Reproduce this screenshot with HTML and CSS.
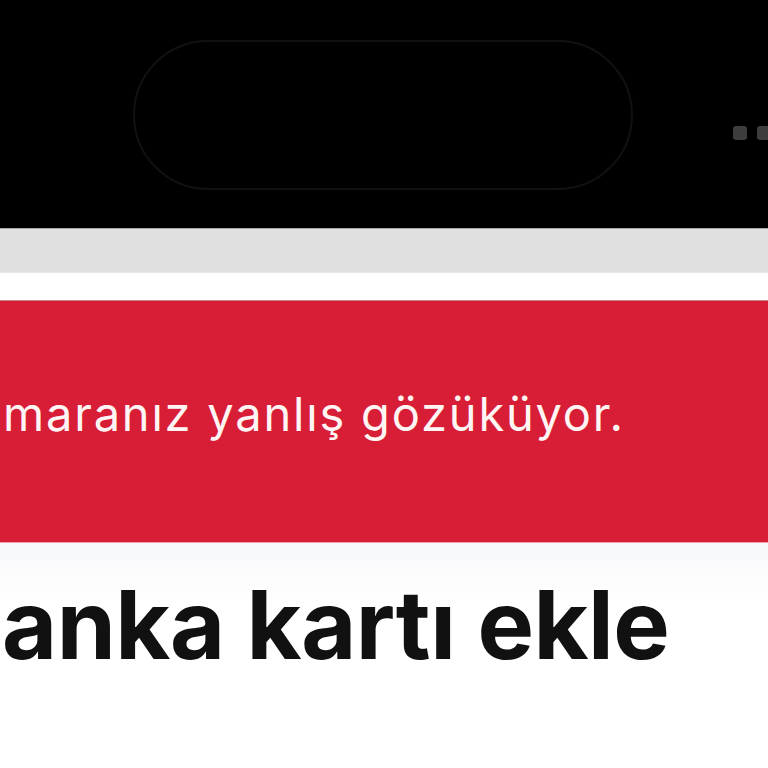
FILE: index.html
```html
<!DOCTYPE html>
<html lang="tr">
<head>
<meta charset="utf-8">
<link rel="stylesheet" href="styles.css">
</head>
<body>
<div class="status">
  <div class="island"></div>
  <div class="dots"><span class="dot"></span><span class="dot"></span></div>
</div>
<div class="toolbar"></div>
<div class="gap"></div>
<div class="alert"><p class="alert-text">maranız yanlış gözüküyor.</p></div>
<div class="content">
  <h1 class="title">anka kartı ekle</h1>
</div>
</body>
</html>
```
FILE: styles.css
```css
html, body {
  margin: 0;
  padding: 0;
  background: #ffffff;
  width: 768px;
  height: 768px;
  overflow: hidden;
  font-family: Inter, "Open Sans", sans-serif;
}
.status {
  background: #000;
  height: 229px;
  display: flex;
  align-items: flex-start;
  padding-left: 133px;
  box-sizing: border-box;
  border-bottom: 1px solid #a8a8a8;
}
.island {
  margin-top: 40px;
  width: 500px;
  height: 150px;
  border: 2px solid #111;
  border-radius: 75px;
  box-sizing: border-box;
  flex: none;
}
.dots {
  display: flex;
  gap: 10px;
  margin-left: 100px;
  margin-top: 126px;
  flex: none;
}
.dot {
  width: 14px;
  height: 14px;
  border-radius: 3px;
  background: #3d3d3d;
}
.toolbar {
  background: #e0e0e0;
  height: 43px;
  border-bottom: 1px solid #e8e8e8;
}
.gap {
  height: 27px;
  background: #fff;
  border-bottom: 1px solid #c9828b;
}
.alert {
  background: #d81e36;
  height: 242px;
  box-sizing: border-box;
  border-bottom: 1px solid #f0a0aa;
  display: flex;
  align-items: flex-start;
}
.alert-text {
  margin: 0;
  padding-top: 85px;
  padding-left: 3px;
  color: #fff5f5;
  font-size: 47px;
  line-height: 56px;
  font-weight: 400;
  letter-spacing: 1.8px;
  white-space: nowrap;
}
.content {
  background: linear-gradient(#f7f8fa, #ffffff 60px);
  height: 223px;
}
.title {
  margin: 0;
  padding-top: 27px;
  padding-left: 2px;
  font-size: 95px;
  line-height: 110px;
  font-weight: 700;
  color: #111111;
  white-space: nowrap;
  letter-spacing: -0.5px;
}
```
